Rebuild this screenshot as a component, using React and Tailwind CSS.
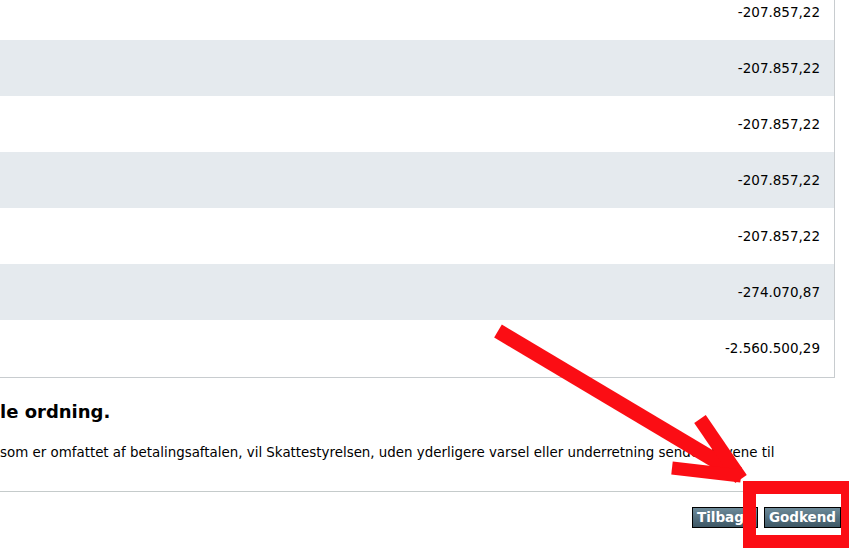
import React from 'react';

const rows = [
  '-207.857,22',
  '-207.857,22',
  '-207.857,22',
  '-207.857,22',
  '-207.857,22',
  '-274.070,87',
  '-2.560.500,29',
];

function ActionButton({ children, className }) {
  return (
    <button
      className={`h-[21px] border border-black bg-gradient-to-b from-[#6d8a99] to-[#3e5866] text-white font-bold text-[13.5px] leading-none ${className}`}
    >
      {children}
    </button>
  );
}

export default function App() {
  return (
    <div className="relative w-[849px] h-[557px] overflow-hidden bg-white text-black font-['DejaVu_Sans',Verdana,sans-serif]">
      {/* Table */}
      <div className="-mt-[16px] w-[835px] border-r border-b border-[#c8cccf]">
        {rows.map((value, i) => (
          <div
            key={i}
            className={`flex items-center justify-end pr-[14px] text-[13.5px] ${
              i === rows.length - 1 ? 'h-[57px]' : 'h-[56px]'
            } ${i % 2 === 1 ? 'bg-[#e5eaee]' : 'bg-white'}`}
          >
            {value}
          </div>
        ))}
      </div>

      {/* Text */}
      <h2 className="mt-[22px] text-[18px] font-bold leading-[24px]">le ordning.</h2>
      <p className="mt-[20px] text-[13.4px] leading-[18px] whitespace-nowrap">
        som er omfattet af betalingsaftalen, vil Skattestyrelsen, uden yderligere varsel eller underretning sende kravene til
      </p>

      <div className="mt-[29px] w-[849px] border-t border-[#c5cbcb]" />

      {/* Buttons */}
      <div className="mt-[15px] flex justify-end gap-[6px] pr-[8px]">
        <ActionButton className="w-[66px]">Tilbage</ActionButton>
        <ActionButton className="w-[77px]">Godkend</ActionButton>
      </div>

      {/* Annotation overlay */}
      <svg className="absolute left-0 top-0 pointer-events-none" width="849" height="557">
        <g stroke="#fb0d14" strokeLinecap="butt" fill="none">
          <line x1="498" y1="331" x2="738" y2="474" strokeWidth="15" />
          <line x1="700" y1="419" x2="741" y2="479" strokeWidth="14" />
          <line x1="672" y1="468" x2="741" y2="476" strokeWidth="13" />
        </g>
      </svg>
      <div className="absolute left-[743px] top-[481px] w-[111px] h-[67px] border-[13px] border-[#fb0d14]" />
    </div>
  );
}
